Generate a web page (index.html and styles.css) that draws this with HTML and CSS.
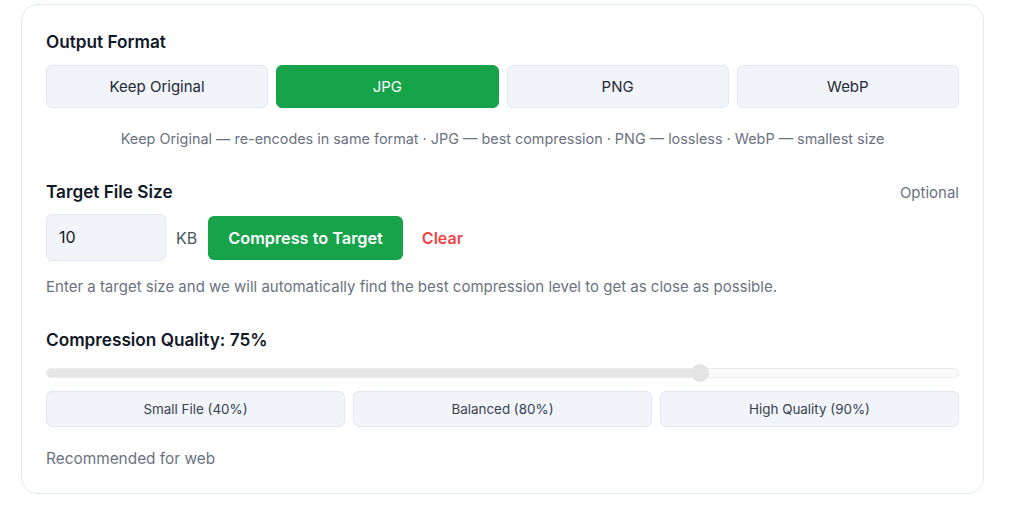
FILE: index.html
```html
<!DOCTYPE html>
<html>
<head>
<meta charset="utf-8">
<link rel="stylesheet" href="styles.css">
</head>
<body>
<div class="card">
  <div class="section-title">Output Format</div>
  <div class="formats">
    <button class="fmt">Keep Original</button>
    <button class="fmt active">JPG</button>
    <button class="fmt">PNG</button>
    <button class="fmt">WebP</button>
  </div>
  <p class="fmt-note">Keep Original — re-encodes in same format · JPG — best compression · PNG — lossless · WebP — smallest size</p>

  <div class="row-head">
    <div class="section-title">Target File Size</div>
    <div class="optional">Optional</div>
  </div>
  <div class="target-row">
    <div class="size-input">10</div>
    <span class="unit">KB</span>
    <button class="compress">Compress to Target</button>
    <button class="clear">Clear</button>
  </div>
  <p class="hint">Enter a target size and we will automatically find the best compression level to get as close as possible.</p>

  <div class="section-title quality">Compression Quality: 75%</div>
  <div class="slider">
    <div class="track"><div class="fill" style="width:71.6%"></div></div>
    <div class="thumb" style="left:71.6%"></div>
  </div>
  <div class="presets">
    <button class="preset">Small File (40%)</button>
    <button class="preset">Balanced (80%)</button>
    <button class="preset">High Quality (90%)</button>
  </div>
  <p class="rec">Recommended for web</p>
</div>
</body>
</html>
```

FILE: styles.css
```css
* { box-sizing: border-box; }
html, body { margin: 0; padding: 0; background: #ffffff; }
body {
  font-family: Inter, "Noto Sans", sans-serif;
  color: #111827;
  padding: 4px 31px 0 21px;
}
.card {
  border: 1px solid #e2e8f0;
  border-radius: 16px;
  padding: 26px 24px 23px 24px;
  width: 963px;
  background: #fff;
}
.section-title {
  font-size: 17.2px;
  font-weight: 600;
  line-height: 22px;
  color: #111827;
}
.formats {
  display: grid;
  grid-template-columns: repeat(4, 1fr);
  gap: 8px;
  margin-top: 12px;
}
button {
  font-family: inherit;
  cursor: pointer;
}
.fmt {
  height: 43px;
  border: 1px solid #e2e8f0;
  background: #f1f4f9;
  border-radius: 6px;
  font-size: 15px;
  color: #1f2937;
}
.fmt.active {
  background: #16a34a;
  border-color: #16a34a;
  color: #ffffff;
}
.fmt-note {
  margin: 21px 0 0 0;
  text-align: center;
  font-size: 14.4px;
  line-height: 20px;
  color: #6b7280;
}
.row-head {
  display: flex;
  justify-content: space-between;
  align-items: center;
  margin-top: 32px;
}
.optional {
  font-size: 15px;
  color: #6b7280;
}
.target-row {
  display: flex;
  align-items: center;
  margin-top: 11px;
}
.size-input {
  width: 120px;
  height: 47px;
  border: 1px solid #e2e8f0;
  background: #f1f4f9;
  border-radius: 6px;
  font-size: 16px;
  line-height: 45px;
  padding-left: 12px;
  color: #111827;
}
.unit {
  font-size: 16px;
  color: #4b5563;
  margin-left: 10px;
}
.compress {
  margin-left: 11px;
  height: 44px;
  padding: 0 20px;
  border: none;
  border-radius: 6px;
  background: #16a34a;
  color: #ffffff;
  font-size: 16.3px;
  font-weight: 600;
}
.clear {
  margin-left: 6px;
  border: none;
  background: none;
  color: #ef4444;
  font-size: 16px;
  font-weight: 600;
  padding: 0 13px;
}
.hint {
  margin: 16px 0 0 0;
  font-size: 15px;
  line-height: 20px;
  color: #6b7280;
}
.quality { margin-top: 32px; }
.slider {
  position: relative;
  height: 18px;
  margin-top: 13px;
}
.track {
  position: absolute;
  left: 0;
  right: 0;
  top: 4px;
  height: 10px;
  border-radius: 5px;
  background: #fafafa;
  border: 1px solid #ececec;
  overflow: hidden;
}
.fill {
  height: 100%;
  background: #e6e6e6;
}
.thumb {
  position: absolute;
  top: 0;
  width: 18px;
  height: 18px;
  margin-left: -9px;
  border-radius: 50%;
  background: #e4e4e4;
}
.presets {
  display: grid;
  grid-template-columns: repeat(3, 1fr);
  gap: 8px;
  margin-top: 9px;
}
.preset {
  height: 36px;
  border: 1px solid #e2e8f0;
  background: #f1f4f9;
  border-radius: 6px;
  font-size: 13.4px;
  color: #374151;
}
.rec {
  margin: 21px 0 0 0;
  font-size: 15.4px;
  line-height: 22px;
  color: #6b7280;
}
```
